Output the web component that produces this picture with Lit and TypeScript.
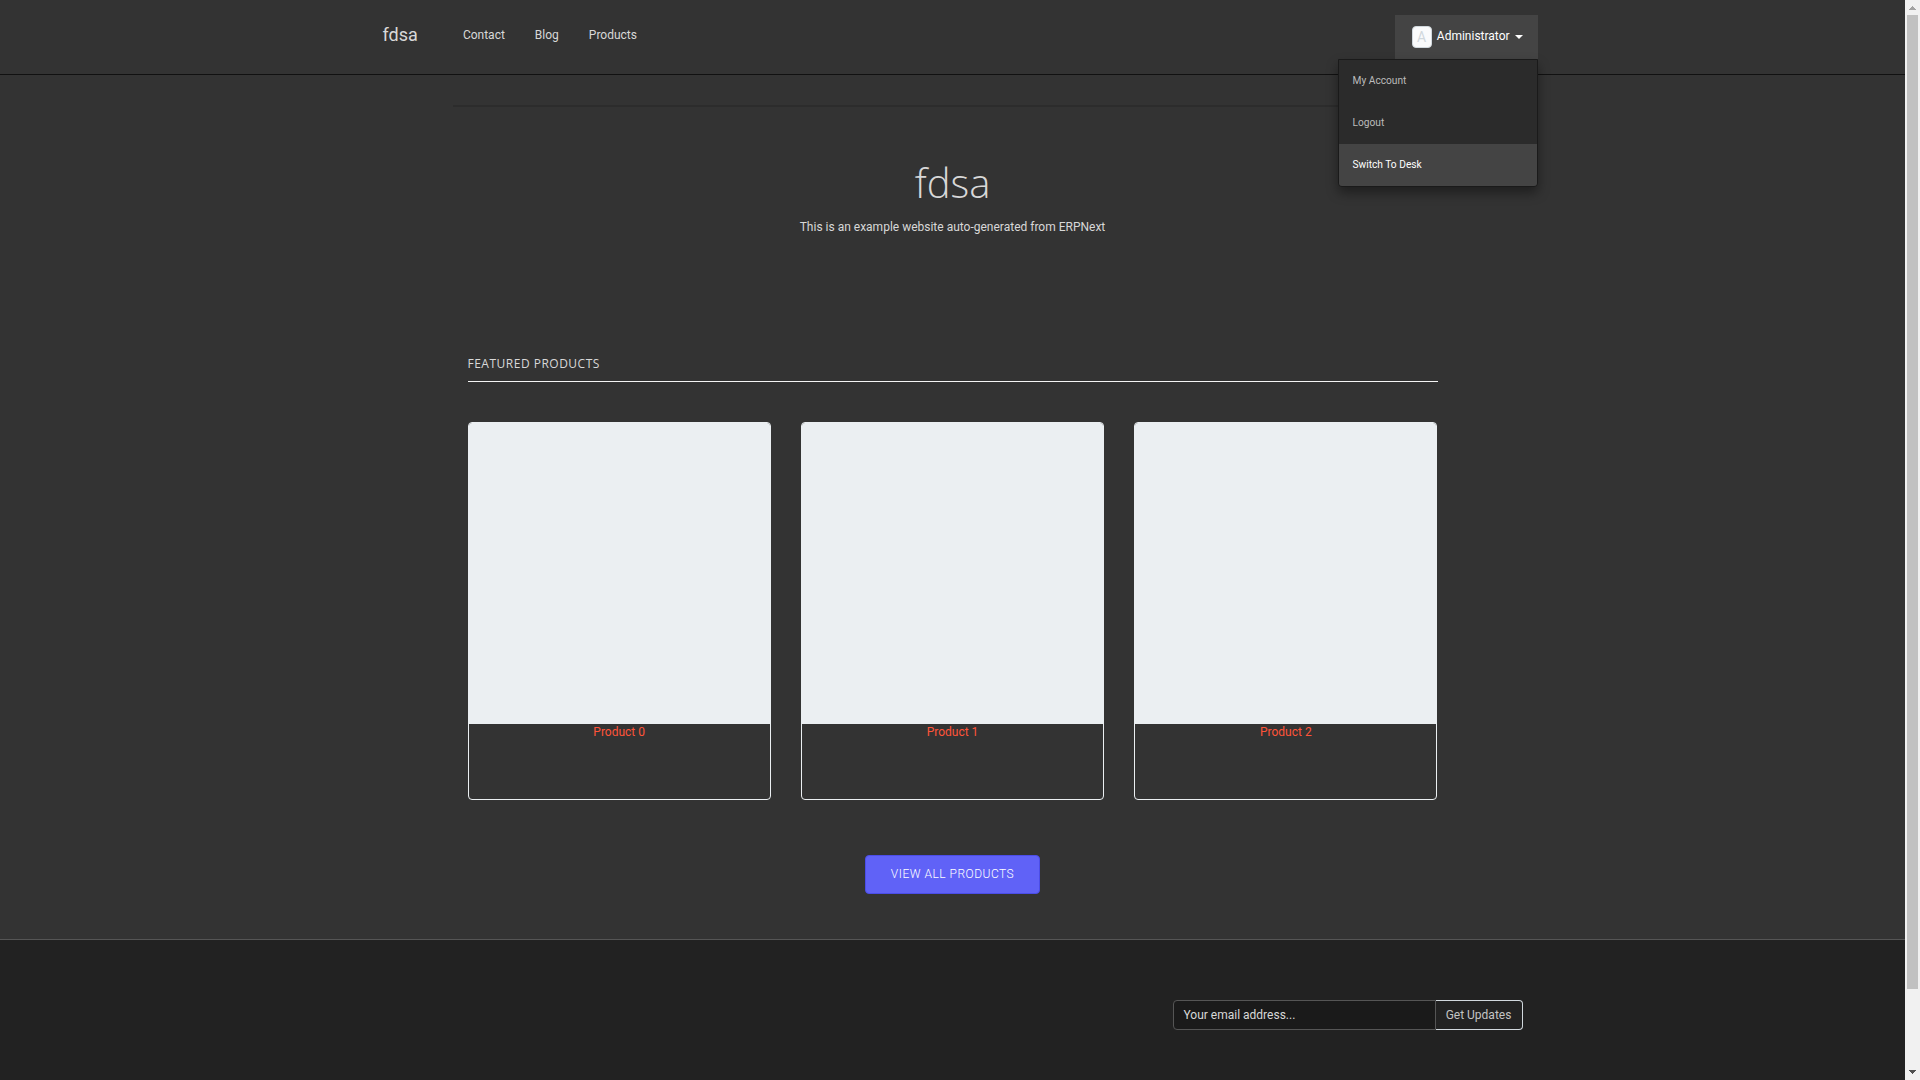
import { LitElement, html, css } from "lit";
import { customElement } from "lit/decorators.js";

@customElement("app-root")
export class AppRoot extends LitElement {
  static styles = css`
    :host { display: block; height: 1080px; overflow: hidden; background: #333; color: #d8d8d8; font: 12px/17px Roboto, sans-serif; }
    * { box-sizing: border-box; }
    .window { display: flex; height: 1080px; }
    .page { width: 1905px; display: flex; flex-direction: column; }
    .nav { height: 75px; border-bottom: 1px solid #111; }
    .container { width: 1170px; margin: 0 auto; display: flex; }
    .nav .container { padding: 15px 0 0 15px; height: 74px; }
    .brand { font-size: 18px; line-height: 20px; padding: 10px 0 0; width: 65.4px; }
    .links { display: flex; flex: 1; }
    .links a { padding: 12px 15px 0; }
    .user { position: relative; width: 143px; height: 44px; background: #444; color: #fff; display: flex; align-items: flex-start; padding: 11px 0 0 17px; }
    .avatar { width: 20px; height: 22px; border: 1px solid #d1d8dd; border-radius: 4px; background: #fafbfc; color: #d1d8dd; font-size: 14px; line-height: 20px; text-align: center; }
    .user-name { margin: 2px 0 0 5.3px; }
    .caret { margin: 9px 0 0 5.7px; border: 4px solid transparent; border-top-color: #fff; border-bottom: 0; }
    .menu { position: absolute; z-index: 2; top: 44px; right: 0; width: 200px; height: 128px; border: 1px solid #1a1a1a; border-radius: 0 0 4px 4px; background: #2b2b2b; box-shadow: 0 6px 12px rgba(0,0,0,.4); font-size: 10.2px; line-height: 14px; color: #bbb; }
    .item { height: 42px; padding: 14px 13px 14px 14px; }
    .item.active { background: #444; color: #fff; border-radius: 0 0 3px 3px; }
    .main { width: 1000px; height: 864px; margin: 0 auto; padding: 30px 15px 0; }
    .rule { height: 2px; background: #2c2c2c; margin: 0 -15px; }
    h1 { margin: 47px 0 0; font: 300 40px/58px "Open Sans", sans-serif; text-align: center; }
    .sub { margin: 7px 0 0; text-align: center; }
    h6 { margin: 119px 0 0; height: 27px; border-bottom: 1px solid #f5f5f5; font: 400 12px/17px "Open Sans", sans-serif; letter-spacing: .5px; text-transform: uppercase; }
    .cards { display: grid; grid-template-columns: repeat(3, 303.33px); gap: 30px; margin-top: 40px; }
    .card { height: 378px; border: 1px solid #ebeff2; border-radius: 4px; overflow: hidden; text-align: center; color: #ff5439; }
    .thumb { height: 301px; background: #ebeff2; }
    .more { display: block; width: 175px; height: 39px; margin: 55px auto 0; border: 1px solid #4b4de8; border-radius: 4px; background: #6062f7; color: #fff; font-weight: 300; text-align: center; line-height: 36px; letter-spacing: .5px; }
    .footer { flex: 1; border-top: 1px solid #555; background: #222; }
    .footer .container { justify-content: flex-end; padding: 60px 15px 0 0; }
    .email { width: 263px; height: 30px; border: 1px solid #555; border-radius: 4px 0 0 4px; background: #1a1a1a; padding: 6px 10px; }
    .submit { width: 87px; height: 30px; border: 1px solid #d1d8dd; border-left: 0; border-radius: 0 4px 4px 0; padding: 6px 0; text-align: center; color: #c4c4c4; }
    .scroll { width: 15px; background: #f1f1f1; display: flex; flex-direction: column; align-items: center; }
    .scroll svg { display: block; width: 15px; height: 15px; }
    .track { flex: 1; width: 11px; }
    .thumb-bar { height: 974px; background: #c1c1c1; }
  `;

  render() {
    return html`<div class="window">
      <div class="page">
        <nav class="nav"><div class="container">
          <div class="brand">fdsa</div>
          <div class="links"><a>Contact</a><a>Blog</a><a>Products</a></div>
          <div class="user">
            <span class="avatar">A</span><span class="user-name">Administrator</span><i class="caret"></i>
            <div class="menu">
              <div class="item">My Account</div><div class="item">Logout</div><div class="item active">Switch To Desk</div>
            </div>
          </div>
        </div></nav>
        <main class="main">
          <div class="rule"></div>
          <h1>fdsa</h1>
          <p class="sub">This is an example website auto-generated from ERPNext</p>
          <h6>Featured Products</h6>
          <div class="cards">
            ${[0, 1, 2].map((n) => html`<div class="card"><div class="thumb"></div>Product ${n}</div>`)}
          </div>
          <a class="more">VIEW ALL PRODUCTS</a>
        </main>
        <footer class="footer"><div class="container">
          <div class="email">Your email address...</div><div class="submit">Get Updates</div>
        </div></footer>
      </div>
      <div class="scroll">
        <svg viewBox="0 0 15 15" shape-rendering="crispEdges"><path d="M4 10h7L7.5 6z" fill="#a3a3a3"/></svg>
        <div class="track"><div class="thumb-bar"></div></div>
        <svg viewBox="0 0 15 15" shape-rendering="crispEdges"><path d="M4 5h7L7.5 9z" fill="#505050"/></svg>
      </div>
    </div>`;
  }
}
